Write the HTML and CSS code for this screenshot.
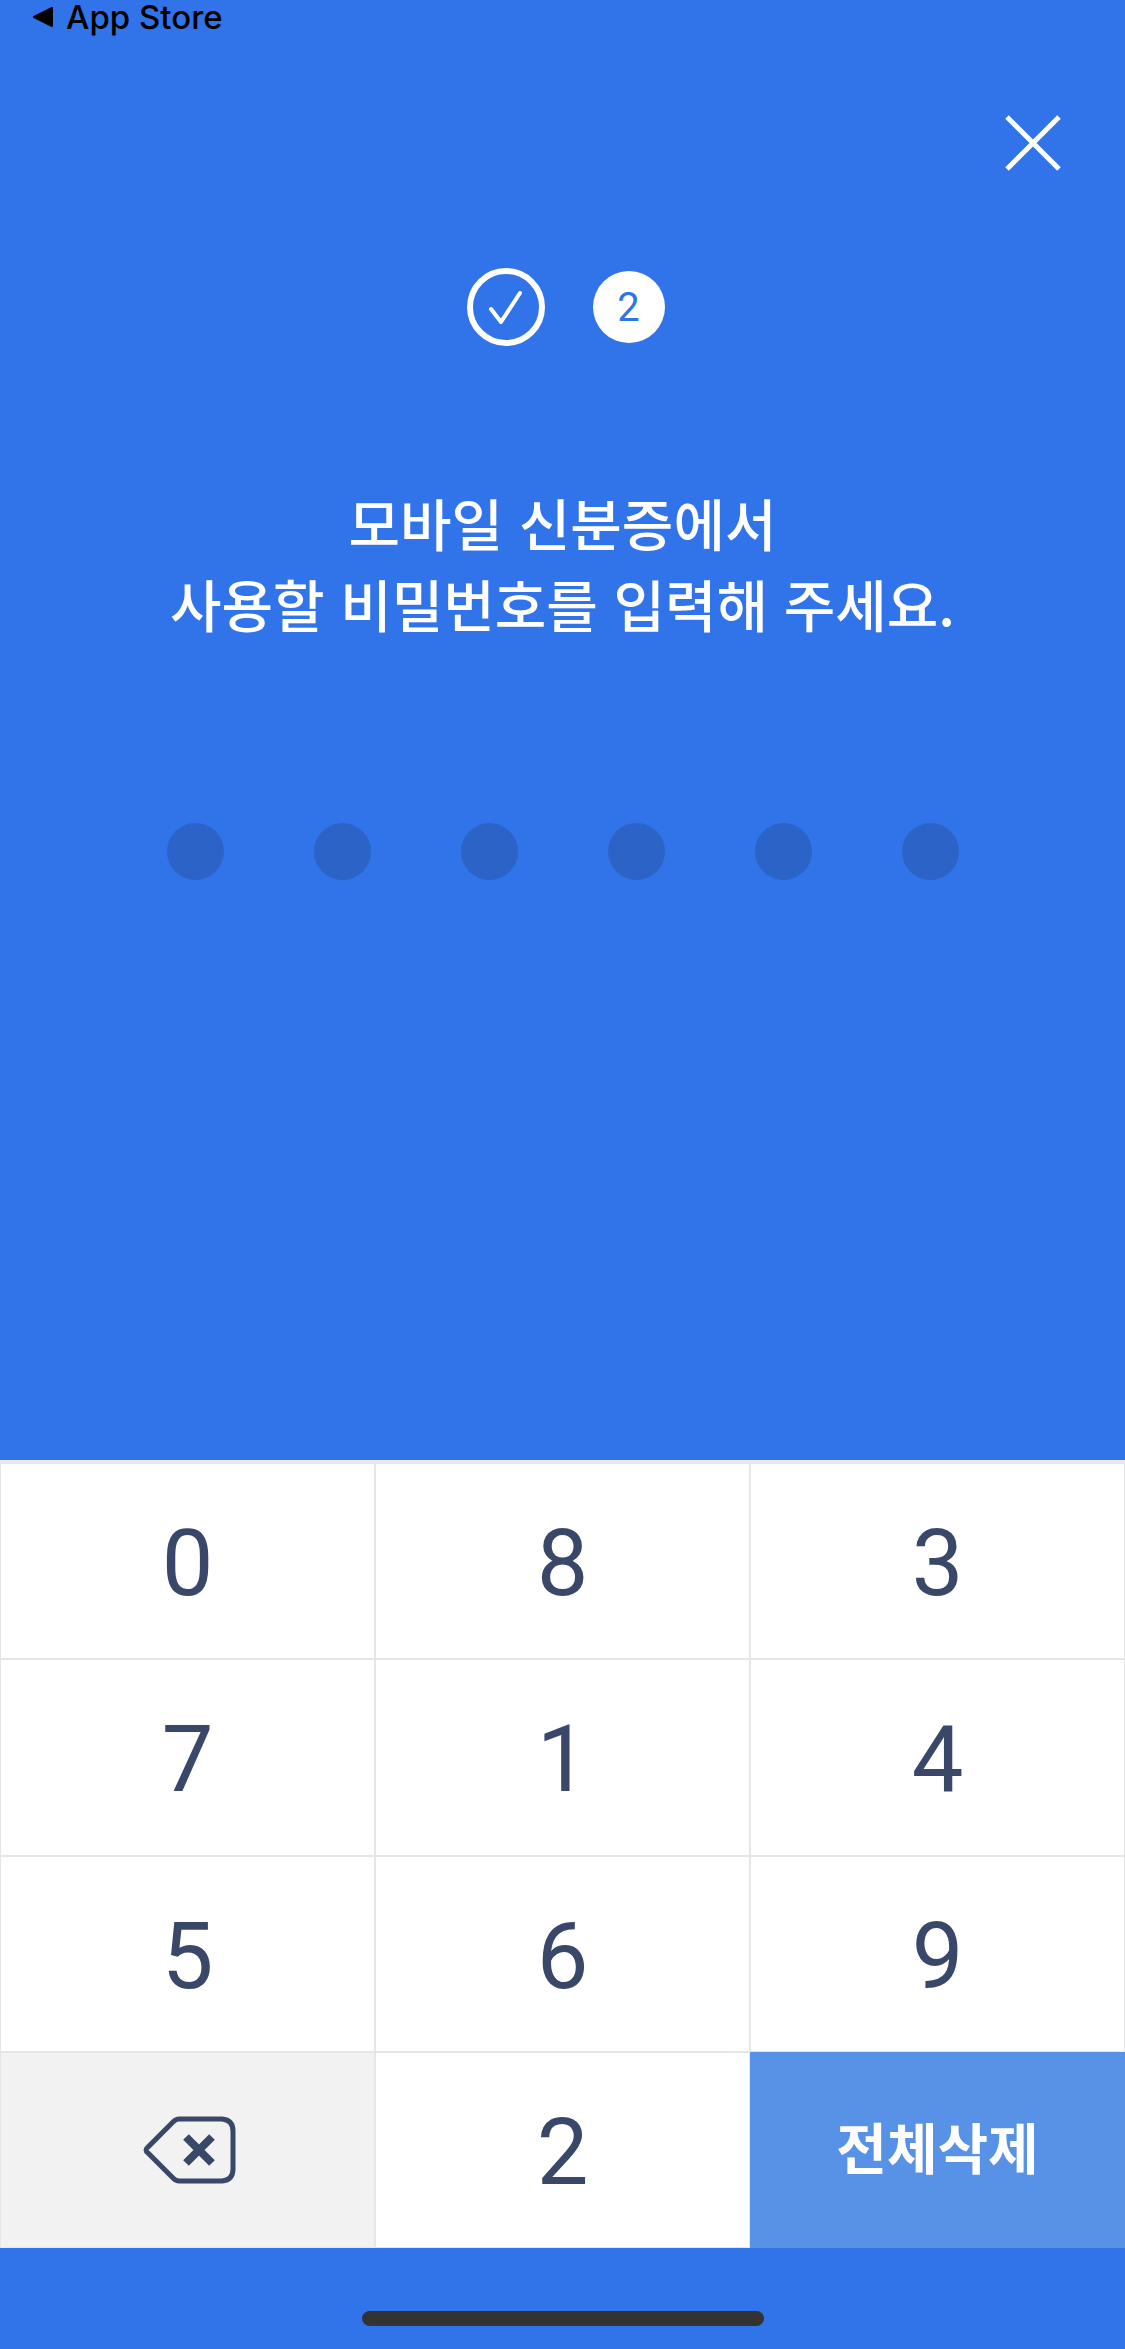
FILE: index.html
```html
<!DOCTYPE html>
<html lang="ko">
<head>
<meta charset="utf-8">
<meta name="viewport" content="width=device-width, initial-scale=1">
<title>모바일 신분증 비밀번호</title>
<link rel="stylesheet" href="styles.css">
</head>
<body>
<div class="screen">
  <header class="top">
    <a class="back" href="#">
      <svg class="back-icon" viewBox="0 0 22 22" aria-hidden="true"><path d="M2 11 20 2v18z" fill="#000" stroke="#000" stroke-width="2" stroke-linejoin="round"/></svg>
      App Store
    </a>
    <button class="close" type="button" aria-label="닫기">
      <svg class="close-icon" viewBox="0 0 60 60" aria-hidden="true"><path d="M4 4 56 56M56 4 4 56" stroke="#fff" stroke-width="5"/></svg>
    </button>
  </header>
  <main class="content">
    <ol class="steps">
      <li class="step done" aria-label="1">
        <svg class="check" viewBox="0 0 78 78" aria-hidden="true"><path d="M24 41 34 54 53 25" fill="none" stroke="#fff" stroke-width="4" stroke-linecap="round" stroke-linejoin="round"/></svg>
      </li>
      <li class="step current">2</li>
    </ol>
    <h1 class="title">모바일 신분증에서<br>사용할 비밀번호를 입력해 주세요.</h1>
    <div class="dots" role="img" aria-label="비밀번호 6자리">
      <span class="dot"></span><span class="dot"></span><span class="dot"></span><span class="dot"></span><span class="dot"></span><span class="dot"></span>
    </div>
  </main>
  <div class="keypad">
    <button class="key digit" type="button">0</button>
    <button class="key digit" type="button">8</button>
    <button class="key digit" type="button">3</button>
    <button class="key digit" type="button">7</button>
    <button class="key digit" type="button">1</button>
    <button class="key digit" type="button">4</button>
    <button class="key digit" type="button">5</button>
    <button class="key digit" type="button">6</button>
    <button class="key digit" type="button">9</button>
    <button class="key erase" type="button" aria-label="지우기">
      <svg class="erase-icon" viewBox="0 0 96 68" aria-hidden="true"><g fill="none" stroke="#394768"><path d="M39 3H82Q93 4 93 15V53Q93 64 82 65H39Q36 65 33 62L8 37Q4 34 8 31L33 6Q36 3 39 3Z" stroke-width="5"/><path d="M46 21 72 47M72 21 46 47" stroke-width="8"/></g></svg>
    </button>
    <button class="key digit" type="button">2</button>
    <button class="key clear" type="button">전체삭제</button>
  </div>
  <footer class="home"><div class="home-bar"></div></footer>
</div>
</body>
</html>
```
FILE: styles.css
```css
* {
  box-sizing: border-box;
}

body {
  margin: 0;
  background: #3173e9;
  font-family: "Noto Sans CJK KR", sans-serif;
}

button {
  margin: 0;
  padding: 0;
  border: 0;
  background: none;
}

svg {
  display: block;
}

.screen {
  display: flex;
  flex-direction: column;
  min-height: 100vh;
}

.top {
  display: flex;
  flex-direction: column;
}

.back {
  display: flex;
  align-items: center;
  gap: 12px;
  height: 34px;
  padding-left: 32px;
  color: #000;
  font: 500 33px/34px Inter, sans-serif;
  text-decoration: none;
}

.back-icon {
  width: 22px;
  height: 22px;
}

.close {
  align-self: flex-end;
  margin: 79px 62px 0 0;
}

.close-icon {
  width: 60px;
  height: 60px;
}

.content {
  flex: 1;
  padding-top: 95px;
}

.steps {
  display: flex;
  align-items: center;
  justify-content: center;
  gap: 48px;
  margin: 0;
  padding: 0 0 0 6px;
  list-style: none;
}

.step {
  display: flex;
  align-items: center;
  justify-content: center;
  border-radius: 50%;
}

.done {
  width: 78px;
  height: 78px;
  border: 6px solid #fff;
}

.check {
  flex: none;
  width: 78px;
  height: 78px;
}

.current {
  width: 72px;
  height: 72px;
  padding-top: 2px;
  background: #fff;
  color: #3173e9;
  font: 400 40px/40px Roboto, sans-serif;
}

.title {
  margin: 135px 0 0;
  color: #fff;
  font-size: 56px;
  font-weight: 500;
  line-height: 81px;
  text-align: center;
}

.dots {
  display: flex;
  justify-content: center;
  gap: 90px;
  margin-top: 180px;
}

.dot {
  width: 57px;
  height: 57px;
  border-radius: 50%;
  background: #2b64c6;
}

.keypad {
  display: grid;
  grid-template-columns: repeat(3, 1fr);
  grid-auto-rows: 1fr;
  min-height: 788px;
  border-top: 3px solid #e9e9ed;
  background: #fff;
}

.key {
  display: flex;
  align-items: center;
  justify-content: center;
  border: 1px solid #e6e6e6;
  color: #394768;
}

.digit {
  padding-top: 6px;
  font: 400 92px/108px Roboto, sans-serif;
}

.erase {
  background: #f2f2f2;
}

.erase-icon {
  width: 96px;
  height: 68px;
}

.clear {
  padding-bottom: 10px;
  border-color: #5892e6;
  background: #5892e6;
  color: #fff;
  font: 700 55px/80px "Noto Sans CJK KR", sans-serif;
}

.home {
  display: flex;
  justify-content: center;
  padding: 63px 0 23px;
}

.home-bar {
  width: 402px;
  max-width: 60%;
  height: 15px;
  border-radius: 8px;
  background: #333;
}
```
